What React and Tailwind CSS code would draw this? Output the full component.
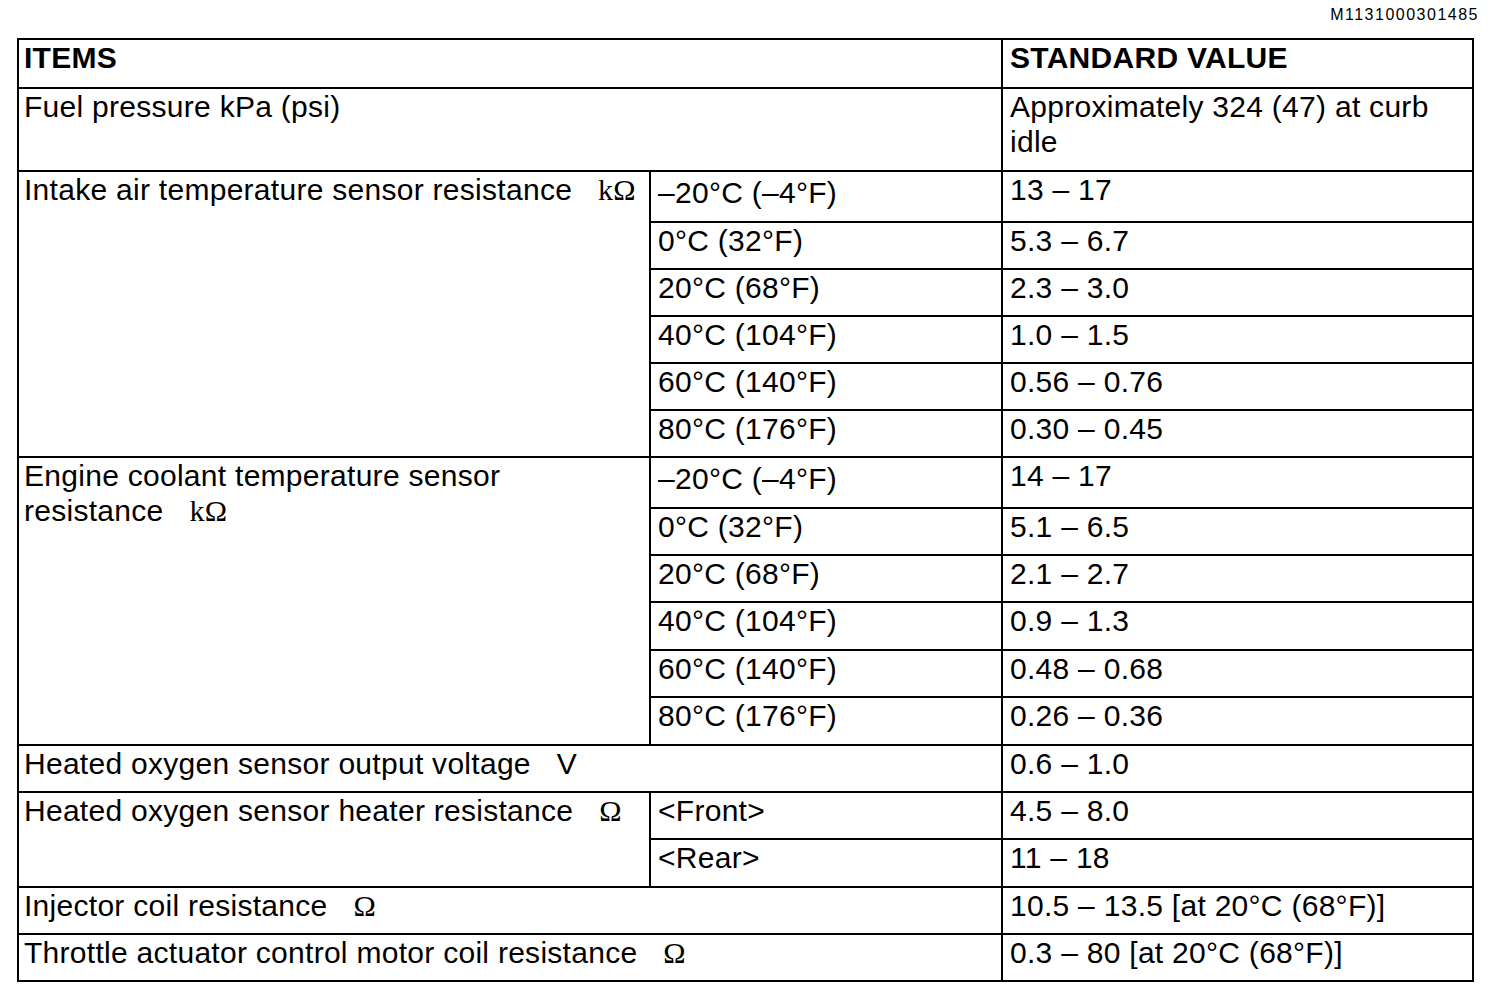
import React from "react";

// Standard values table: items / condition / standard value
const intakeRows = [
  ["–20°C (–4°F)", "13 – 17"],
  ["0°C (32°F)", "5.3 – 6.7"],
  ["20°C (68°F)", "2.3 – 3.0"],
  ["40°C (104°F)", "1.0 – 1.5"],
  ["60°C (140°F)", "0.56 – 0.76"],
  ["80°C (176°F)", "0.30 – 0.45"],
];

const coolantRows = [
  ["–20°C (–4°F)", "14 – 17"],
  ["0°C (32°F)", "5.1 – 6.5"],
  ["20°C (68°F)", "2.1 – 2.7"],
  ["40°C (104°F)", "0.9 – 1.3"],
  ["60°C (140°F)", "0.48 – 0.68"],
  ["80°C (176°F)", "0.26 – 0.36"],
];

const Unit = ({ children }) => (
  <span className="whitespace-pre">
    {"   "}
    <span className="font-['Liberation_Serif','Times_New_Roman',serif]">{children}</span>
  </span>
);

const Cell = ({ className = "", children }) => (
  <div className={"border-l-2 border-t-2 border-black leading-[35px] " + className}>{children}</div>
);

const CondRows = ({ rows }) =>
  rows.map(([cond, value], i) => (
    <React.Fragment key={i}>
      <Cell className={i === 0 ? "pl-[7px] pt-[3px]" : "pl-[7px]"}>{cond}</Cell>
      <Cell className="pl-[7px]">{value}</Cell>
    </React.Fragment>
  ));

export default function App() {
  return (
    <div className="min-h-screen w-[1504px] bg-white text-black font-['Liberation_Sans',Arial,sans-serif]">
      <div className="flex h-[38px] justify-end pr-[25px] pt-[6px]">
        <span className="text-[16px] leading-[18px] tracking-[1.5px]">M1131000301485</span>
      </div>

      <div className="ml-[17px] grid w-[1457px] grid-cols-[632px_352px_471px] grid-rows-[49px_83px_51px_47px_47px_47px_47px_47px_51px_47px_47px_48px_47px_48px_47px_47px_48px_47px_47px] border-b-2 border-r-2 border-black text-[30px] tracking-[0.28px]">
        <Cell className="col-span-2 pl-[5px] font-bold">ITEMS</Cell>
        <Cell className="pl-[7px] font-bold">STANDARD VALUE</Cell>

        <Cell className="col-span-2 pl-[5px]">Fuel pressure kPa (psi)</Cell>
        <Cell className="pl-[7px]">
          Approximately 324 (47) at curb
          <br />
          idle
        </Cell>

        <Cell className="row-span-6 pl-[5px]">
          Intake air temperature sensor resistance<Unit>kΩ</Unit>
        </Cell>
        <CondRows rows={intakeRows} />

        <Cell className="row-span-6 pl-[5px]">
          Engine coolant temperature sensor
          <br />
          resistance<Unit>kΩ</Unit>
        </Cell>
        <CondRows rows={coolantRows} />

        <Cell className="col-span-2 pl-[5px]">
          Heated oxygen sensor output voltage<span className="whitespace-pre">{"   "}V</span>
        </Cell>
        <Cell className="pl-[7px]">0.6 – 1.0</Cell>

        <Cell className="row-span-2 pl-[5px]">
          Heated oxygen sensor heater resistance<Unit>Ω</Unit>
        </Cell>
        <Cell className="pl-[7px]">&lt;Front&gt;</Cell>
        <Cell className="pl-[7px]">4.5 – 8.0</Cell>
        <Cell className="pl-[7px]">&lt;Rear&gt;</Cell>
        <Cell className="pl-[7px]">11 – 18</Cell>

        <Cell className="col-span-2 pl-[5px]">
          Injector coil resistance<Unit>Ω</Unit>
        </Cell>
        <Cell className="pl-[7px]">10.5 – 13.5 [at 20°C (68°F)]</Cell>

        <Cell className="col-span-2 pl-[5px]">
          Throttle actuator control motor coil resistance<Unit>Ω</Unit>
        </Cell>
        <Cell className="pl-[7px]">0.3 – 80 [at 20°C (68°F)]</Cell>
      </div>
    </div>
  );
}
